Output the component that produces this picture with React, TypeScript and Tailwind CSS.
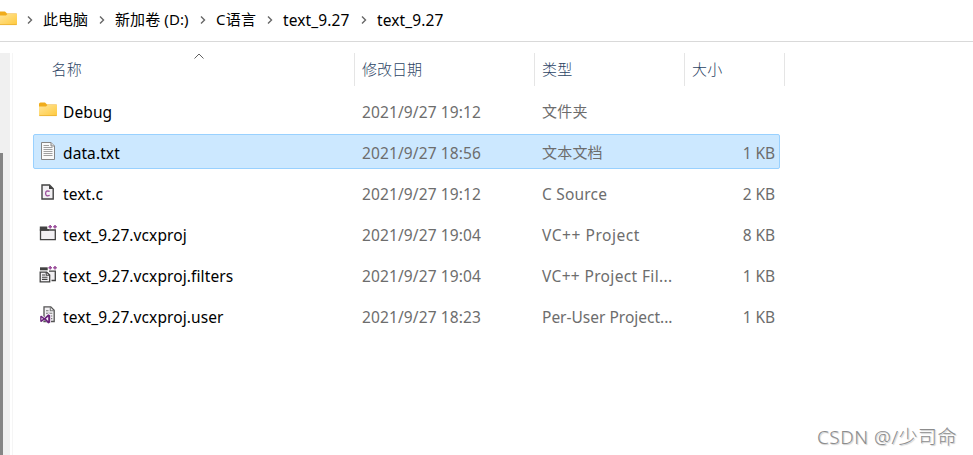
import type { ReactNode } from "react";

function FolderIcon({ id, className }: { id: string; className: string }) {
  return (
    <svg viewBox="0 0 19 15" className={className}>
      <defs>
        <linearGradient id={id} x1="0" y1="0" x2="1" y2="1">
          <stop offset="0" stopColor="#ffe59a" />
          <stop offset="1" stopColor="#ffc93c" />
        </linearGradient>
      </defs>
      <path d="M0 2Q0 .5 1.5 .5H6L8 2.5H17.5Q18 2.5 18 3.5V8H0Z" fill="#f0ac1c" />
      <path d="M0 4.5H7L8.5 3H18V13.2Q18 14 17 14H1Q0 14 0 13.2Z" fill={`url(#${id})`} />
      <path d="M.3 13.6H17.7" stroke="#e8af30" strokeWidth=".8" />
    </svg>
  );
}

function TextIcon() {
  return (
    <svg viewBox="0 0 16 20" className="mb-0.5 ml-px h-5 w-4">
      <path d="M1.5 1.5H11L14.5 5V18.5H1.5Z" fill="#fafafa" stroke="#858585" />
      <path d="M11 1.5V5H14.5" fill="#ddd" stroke="#858585" />
      <path d="M3.5 4.5H9M3.5 6.5H12.5M3.5 8.5H12.5M3.5 10.5H12.5M3.5 12.5H12.5M3.5 14.5H12.5" stroke="#a0a0a0" />
    </svg>
  );
}

function CIcon() {
  return (
    <svg viewBox="0 0 18 18" className="mb-0.5 size-[18px]">
      <path d="M3 2H10.5L14.2 5.7V16H3Z" fill="#f2f0f3" stroke="#424242" strokeWidth="1.4" />
      <path d="M10 2V6H14.5Z" fill="#424242" />
      <path d="M10.7 8.4Q6.7 7 6.6 10.4Q6.7 13.8 10.7 12.4" fill="none" stroke="#9b4f9b" strokeWidth="1.3" />
    </svg>
  );
}

function PlusPair() {
  return <path d="M9.4 2.7H13M11.2 .9V4.5M14.2 2.7H17.8M16 .9V4.5" stroke="#9b4f9b" strokeWidth="1.6" />;
}

function ProjectIcon() {
  return (
    <svg viewBox="0 0 18 18" className="mb-0.5 size-[18px]">
      <path d="M1.5 6H16.3V15.7H1.5Z" fill="#f2f0f3" stroke="#424242" strokeWidth="1.3" />
      <path d="M.8 2.5H8.3V5.3H10V6.7H.8Z" fill="#424242" />
      <PlusPair />
    </svg>
  );
}

function FiltersIcon() {
  return (
    <svg viewBox="0 0 18 18" className="mb-0.5 size-[18px]">
      <path d="M1 2.3H8.7V5.3H1Z" fill="#424242" />
      <path d="M10 6.2H16.3V15.5H12.5" fill="#f2f0f3" stroke="#424242" strokeWidth="1.3" />
      <path d="M1.2 7.1H7.7L10.7 10V16.8H1.2Z" fill="#f2f0f3" stroke="#424242" strokeWidth="1.3" />
      <path d="M7.2 7V10.2H10.5M3 10H6M3 12.2H8.5M3 14.4H8.5" fill="none" stroke="#424242" strokeWidth="1.1" />
      <PlusPair />
    </svg>
  );
}

function UserIcon() {
  return (
    <svg viewBox="0 0 18 18" className="mb-0.5 ml-px size-[18px]">
      <path d="M4 .8H10.8L14.2 4.2V15.5H4Z" fill="#f2f0f3" stroke="#555" strokeWidth="1.3" />
      <path d="M10.3 1V4.8H14.5M6 4.8H8.5M6 7.3H12.3M9 10H12.3M11 12.6H12.3" fill="none" stroke="#777" strokeWidth="1.1" />
      <path d="M0 9.2L1.3 8.5L4.5 11.2L8.5 7L11 8.2V17L8.5 18L4.5 14L1.3 16.5L0 15.8Z" fill="#f7f3f9" />
      <path d="M.2 10.2L1.4 9.7L4.4 11.9L8.2 8.3L10.2 9.2V16.4L8.2 17.4L4.4 13.8L1.4 16L.2 15.4ZM1.5 11.5V14.2L3 12.8ZM8.2 10.8L5.9 12.8L8.2 14.9Z" fill="#68217a" fillRule="evenodd" />
    </svg>
  );
}

type FileRow = {
  icon: ReactNode;
  name: string;
  date: string;
  type: string;
  typeClass: string;
  size: string;
  selected?: boolean;
};

const files: FileRow[] = [
  { icon: <FolderIcon id="folder-row" className="-mt-0.5 h-[15px] w-[19px]" />, name: "Debug", date: "2021/9/27 19:12", type: "文件夹", typeClass: "text-[15px] tracking-[0.2px]", size: "" },
  { icon: <TextIcon />, name: "data.txt", date: "2021/9/27 18:56", type: "文本文档", typeClass: "text-[15px] tracking-[0.2px]", size: "1 KB", selected: true },
  { icon: <CIcon />, name: "text.c", date: "2021/9/27 19:12", type: "C Source", typeClass: "pt-0.5 tracking-[0.2px]", size: "2 KB" },
  { icon: <ProjectIcon />, name: "text_9.27.vcxproj", date: "2021/9/27 19:04", type: "VC++ Project", typeClass: "pt-0.5 tracking-[0.55px]", size: "8 KB" },
  { icon: <FiltersIcon />, name: "text_9.27.vcxproj.filters", date: "2021/9/27 19:04", type: "VC++ Project Fil...", typeClass: "pt-0.5 tracking-[0.35px]", size: "1 KB" },
  { icon: <UserIcon />, name: "text_9.27.vcxproj.user", date: "2021/9/27 18:23", type: "Per-User Project...", typeClass: "pt-0.5 tracking-[0px]", size: "1 KB" },
];

const crumbs = [
  { label: "此电脑", box: "w-[72px]", text: "mb-0.5" },
  { label: "新加卷 (D:)", box: "w-[101px]", text: "mb-0.5 tracking-[0.1px]" },
  { label: "C语言", box: "w-[67px]", text: "mb-0.5 tracking-[0.2px]" },
  { label: "text_9.27", box: "w-[94px]", text: "text-[15.5px] tracking-[0.1px]" },
  { label: "text_9.27", box: "w-[80px]", text: "text-[15.5px] tracking-[0.1px]" },
];

function Chevron() {
  return (
    <svg viewBox="0 0 6 8" className="h-2 w-1.5 shrink-0">
      <path d="M1 .5L4.5 4L1 7.5" fill="none" stroke="#666" strokeWidth="1.4" />
    </svg>
  );
}

export default function App() {
  return (
    <div className="relative flex h-[455px] w-[973px] flex-col overflow-hidden bg-white font-['Noto_Sans','Noto_Sans_CJK_SC',sans-serif] text-[15px] leading-5 text-black">
      <nav className="flex h-[42px] shrink-0 items-center border-b border-[#d9d9d9] pb-[2px]">
        <FolderIcon id="folder-path" className="-ml-px mt-[-2px] h-[15px] w-[19px] shrink-0" />
        <span className="w-[9px] shrink-0" />
        {crumbs.map((crumb, i) => (
          <div key={i} className={`${crumb.box} flex shrink-0 items-center whitespace-nowrap`}>
            <Chevron />
            <span className={`ml-[10px] ${crumb.text}`}>{crumb.label}</span>
          </div>
        ))}
      </nav>
      <div className="flex min-h-0 flex-1 pt-[11px]">
        <aside className="w-[13px] shrink-0 border-r border-[#f5f5f5]">
          <div className="h-full w-[10px] bg-[#f0f0f0] pt-[100px]">
            <div className="h-full w-[3px] bg-[#858585]" />
          </div>
        </aside>
        <main className="pl-5">
          <header className="relative flex h-[33px] font-light text-[#2c4464]">
            <svg viewBox="0 0 10 6" className="absolute left-[161px] top-0 h-1.5 w-2.5">
              <path d="M.5 5.5L5 1L9.5 5.5" fill="none" stroke="#606060" />
            </svg>
            <div className="w-[322px] border-r border-[#e5e5e5] pl-[18.5px] pt-1.5 tracking-[0.2px]">名称</div>
            <div className="w-[180px] border-r border-[#e5e5e5] pl-[7px] pt-1.5">修改日期</div>
            <div className="w-[150px] border-r border-[#e5e5e5] pl-[7px] pt-1.5 tracking-[0.2px]">类型</div>
            <div className="w-[100px] border-r border-[#e5e5e5] pl-[7px] pt-1.5 tracking-[0.2px]">大小</div>
          </header>
          <div className="flex flex-col gap-1.5 pt-[7px]">
            {files.map((file) => (
              <div
                key={file.name}
                className={`flex h-[35px] w-[747px] items-center whitespace-nowrap rounded-[2px] border text-[15.5px] text-[#6d6d6d] ${file.selected ? "border-[#99d1ff] bg-[#cce8ff]" : "border-transparent"}`}
              >
                <div className="ml-[5px] flex w-6 items-center">{file.icon}</div>
                <div className="w-[299px] pt-0.5 tracking-[0.1px] text-black">{file.name}</div>
                <div className="w-[180px] pt-0.5 tracking-[0.12px]">{file.date}</div>
                <div className={`w-[150px] ${file.typeClass}`}>{file.type}</div>
                <div className="w-[83px] pt-0.5 text-right tracking-[-0.1px]">{file.size}</div>
              </div>
            ))}
          </div>
        </main>
      </div>
      <div className="absolute bottom-[6px] left-[817px] whitespace-nowrap text-[19px] font-light leading-6 tracking-[0.5px] text-[#8c8c8c] [text-shadow:1px_1px_1px_#ccc]">CSDN @/少司命</div>
    </div>
  );
}
